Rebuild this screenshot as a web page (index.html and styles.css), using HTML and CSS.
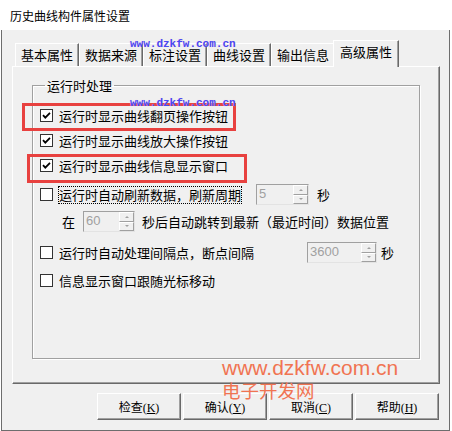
FILE: index.html
```html
<!DOCTYPE html>
<html lang="zh-CN">
<head>
  <meta charset="UTF-8" />
  <title>历史曲线构件属性设置</title>
  <link rel="stylesheet" href="styles.css">
</head>
<body>

  <div class="window">
    <div class="titlebar">历史曲线构件属性设置</div>

    <div class="client">
      <div class="tabs">
        <div class="tab">基本属性</div>
        <div class="tab">数据来源</div>
        <div class="tab">标注设置</div>
        <div class="tab">曲线设置</div>
        <div class="tab">输出信息</div>
        <div class="tab active">高级属性</div>
      </div>

      <div class="panel">
        <fieldset class="group">
          <legend>运行时处理</legend>

          <div class="row row-1">
            <span class="check on"><svg viewBox="0 0 11 11"><path d="M2 5.2 L4.3 7.6 L9 2.8" /></svg></span>
            <span class="label">运行时显示曲线翻页操作按钮</span>
          </div>
          <div class="row">
            <span class="check on"><svg viewBox="0 0 11 11"><path d="M2 5.2 L4.3 7.6 L9 2.8" /></svg></span>
            <span class="label">运行时显示曲线放大操作按钮</span>
          </div>
          <div class="row">
            <span class="check on"><svg viewBox="0 0 11 11"><path d="M2 5.2 L4.3 7.6 L9 2.8" /></svg></span>
            <span class="label">运行时显示曲线信息显示窗口</span>
          </div>

          <div class="row row-4">
            <span class="check"></span>
            <span class="label focus">运行时自动刷新数据，刷新周期</span>
            <span class="spin spin-5"><span class="val">5</span><span class="arrows"><i class="up"></i><i class="down"></i></span></span>
            <span class="unit">秒</span>
          </div>
          <div class="row row-5">
            <span class="pre">在</span>
            <span class="spin spin-60"><span class="val">60</span><span class="arrows"><i class="up"></i><i class="down"></i></span></span>
            <span class="post">秒后自动跳转到最新（最近时间）数据位置</span>
          </div>
          <div class="row row-6">
            <span class="check"></span>
            <span class="label">运行时自动处理间隔点，断点间隔</span>
            <span class="spin spin-3600"><span class="val">3600</span><span class="arrows"><i class="up"></i><i class="down"></i></span></span>
            <span class="unit unit-near">秒</span>
          </div>
          <div class="row row-7">
            <span class="check"></span>
            <span class="label">信息显示窗口跟随光标移动</span>
          </div>
        </fieldset>
      </div>

      <div class="buttons">
        <button>检查(<u>K</u>)</button>
        <button>确认(<u>Y</u>)</button>
        <button>取消(<u>C</u>)</button>
        <button>帮助(<u>H</u>)</button>
      </div>
    </div>

    <!-- annotation marks laid over the dialog -->
    <div class="highlight hl-1"></div>
    <div class="highlight hl-2"></div>
    <span class="wm-blue wm-blue-1">www.dzkfw.com.cn</span>
    <span class="wm-blue wm-blue-2">www.dzkfw.com.cn</span>
    <span class="wm-url">www.dzkfw.com.cn</span>
    <span class="wm-name">电子开发网</span>
  </div>

</body>
</html>
```

FILE: styles.css
```css
body {
  margin: 0;
  background: #fff;
  font-family: "Noto Sans CJK SC", sans-serif;
  font-size: 13px;
  color: #000;
}

.window {
  position: relative;
  width: 449px;
  height: 431px;
  margin-left: 1px;
  display: flex;
  flex-direction: column;
}

.titlebar {
  height: 30px;
  padding-left: 9px;
  display: flex;
  align-items: center;
  font-size: 12px;
  background: #fff;
}

.client {
  flex: 1;
  background: #f0f0f0;
  border: 1px solid #6d6d6d;
  border-top: none;
  display: flex;
  flex-direction: column;
}

/* tabs */
.tabs {
  display: flex;
  align-items: flex-end;
  height: 26px;
  margin-top: 10px;
  padding-left: 13px;
}

.tab {
  height: 23px;
  box-sizing: border-box;
  padding: 0 5px;
  line-height: 21px;
  border-top: 1px solid #fff;
  border-left: 1px solid #fff;
  border-right: 1px solid #696969;
  box-shadow: inset -1px 0 0 #a0a0a0;
  background: #f0f0f0;
}

.tab.active {
  position: relative;
  z-index: 1;
  height: 27px;
  margin-bottom: -1px;
  margin-left: -2px;
  padding: 0 6px 3px;
  line-height: 22px;
}

.panel {
  width: 428px;
  height: 318px;
  box-sizing: border-box;
  margin-left: 10px;
  border-top: 1px solid #fff;
  border-left: 1px solid #fff;
  border-right: 1px solid #696969;
  border-bottom: 1px solid #696969;
  box-shadow: inset -1px -1px 0 #a0a0a0;
  padding: 10px 0 0 19px;
}

/* group box */
.group {
  width: 388px;
  height: 282px;
  box-sizing: border-box;
  margin: 0;
  padding: 9px 0 0 7px;
  border: 1px solid #a0a0a0;
  box-shadow: 1px 1px 0 #fff, inset 1px 1px 0 #fff;
}

.group legend {
  margin-left: 5px;
  padding: 0 2px;
  line-height: 17px;
}

.row {
  display: flex;
  align-items: center;
  height: 25px;
  line-height: 17px;
  white-space: nowrap;
}

.row-4 { margin-top: 4px; }
.row-5 { margin-top: 2px; }
.row-6 { margin-top: 6px; }
.row-7 { margin-top: 3px; }

.check {
  width: 13px;
  height: 13px;
  box-sizing: border-box;
  border: 1px solid #333;
  background: #fff;
  display: flex;
}

.check svg {
  width: 11px;
  height: 11px;
  fill: none;
  stroke: #000;
  stroke-width: 1.8;
}

.label {
  margin-left: 6px;
}

.label.focus {
  margin-left: 5px;
  line-height: 16px;
  border: 1px dotted #000;
}

.pre {
  margin-left: 22px;
}

.post {
  margin-left: 7px;
}

.unit {
  margin-left: 8px;
}

.unit-near {
  margin-left: 4px;
}

/* spin boxes (disabled) */
.spin {
  display: flex;
  height: 21px;
  box-sizing: border-box;
  border: 1px solid;
  border-color: #a0a0a0 #e3e3e3 #e3e3e3 #a0a0a0;
  background: #f0f0f0;
}

.spin-5 { width: 53px; margin-left: 14px; }
.spin-60 { width: 52px; margin-left: 8px; }
.spin-3600 { width: 70px; margin-left: 53px; }

.spin .val {
  flex: 1;
  padding-left: 2px;
  color: #a0a0a0;
  font-family: "Liberation Sans", sans-serif;
  font-size: 13px;
  line-height: 18px;
}

.spin .arrows {
  width: 15px;
  display: flex;
  flex-direction: column;
}

.spin .arrows i {
  flex: 1;
  display: flex;
  align-items: center;
  justify-content: center;
  box-sizing: border-box;
  border: 1px solid;
  border-color: #fff #a0a0a0 #a0a0a0 #fff;
}

.spin .arrows i::after {
  content: "";
  border-left: 2px solid transparent;
  border-right: 2px solid transparent;
}

.spin .arrows .up::after { border-bottom: 2px solid #a0a0a0; }
.spin .arrows .down::after { border-top: 2px solid #a0a0a0; }

/* buttons */
.buttons {
  display: flex;
  gap: 2px;
  margin-top: 9px;
  padding-left: 95px;
}

.buttons button {
  width: 84px;
  height: 27px;
  padding: 0;
  margin: 0;
  font-family: "Liberation Serif", "Noto Sans CJK SC", serif;
  font-size: 12px;
  color: #000;
  background: #f0f0f0;
  border-top: 1px solid #fff;
  border-left: 1px solid #fff;
  border-right: 1px solid #696969;
  border-bottom: 1px solid #696969;
  border-radius: 0;
  box-shadow: inset -1px -1px 0 #a0a0a0;
}

/* overlays */
.highlight {
  position: absolute;
  box-sizing: border-box;
  border: 3px solid #e8413f;
}

.hl-1 { left: 21px; top: 103px; width: 214px; height: 28px; }
.hl-2 { left: 26px; top: 154px; width: 220px; height: 29px; }

.wm-blue {
  position: absolute;
  left: 129px;
  font-family: "Liberation Mono", monospace;
  font-weight: bold;
  font-size: 11px;
  line-height: 11px;
  color: #4848f4;
  text-shadow: 0 0 1px #fbd0d8;
}

.wm-blue-1 { top: 39px; }
.wm-blue-2 { top: 98px; }

.wm-url {
  position: absolute;
  left: 221px;
  top: 357px;
  font-family: "Liberation Sans", sans-serif;
  font-size: 21px;
  line-height: 21px;
  color: #f07452;
}

.wm-name {
  position: absolute;
  left: 221px;
  top: 381px;
  font-size: 18.5px;
  line-height: 19px;
  color: #f07452;
}
```
